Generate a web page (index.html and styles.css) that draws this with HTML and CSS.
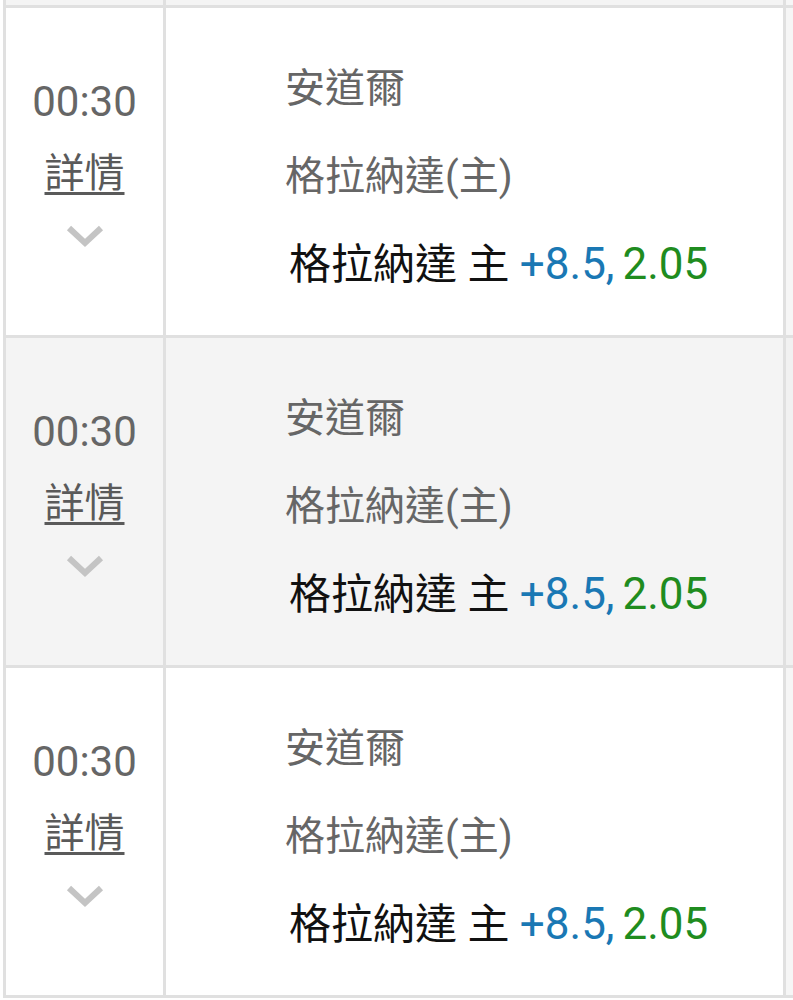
FILE: index.html
```html
<!DOCTYPE html>
<html lang="zh-Hant">
<head>
<meta charset="utf-8">
<link rel="stylesheet" href="styles.css">
</head>
<body>
<div class="table">
  <div class="row stub"><div class="cell left"></div><div class="cell main"></div><div class="cell extra"></div></div>

  <div class="row">
    <div class="cell left">
      <div class="time">00:30</div>
      <a class="detail">詳情</a>
      <svg class="chev" width="38" height="26" viewBox="0 0 38 26"><path d="M3 5 L19 20 L35 5" fill="none" stroke="#c4c4c4" stroke-width="6"/></svg>
    </div>
    <div class="cell main">
      <div class="line team">安道爾</div>
      <div class="line team">格拉納達(主)</div>
      <div class="line pick">格拉納達 主 <span class="hcp">+8.5,</span><span class="odds">2.05</span></div>
    </div>
    <div class="cell extra"></div>
  </div>

  <div class="row alt">
    <div class="cell left">
      <div class="time">00:30</div>
      <a class="detail">詳情</a>
      <svg class="chev" width="38" height="26" viewBox="0 0 38 26"><path d="M3 5 L19 20 L35 5" fill="none" stroke="#c4c4c4" stroke-width="6"/></svg>
    </div>
    <div class="cell main">
      <div class="line team">安道爾</div>
      <div class="line team">格拉納達(主)</div>
      <div class="line pick">格拉納達 主 <span class="hcp">+8.5,</span><span class="odds">2.05</span></div>
    </div>
    <div class="cell extra"></div>
  </div>

  <div class="row">
    <div class="cell left">
      <div class="time">00:30</div>
      <a class="detail">詳情</a>
      <svg class="chev" width="38" height="26" viewBox="0 0 38 26"><path d="M3 5 L19 20 L35 5" fill="none" stroke="#c4c4c4" stroke-width="6"/></svg>
    </div>
    <div class="cell main">
      <div class="line team">安道爾</div>
      <div class="line team">格拉納達(主)</div>
      <div class="line pick">格拉納達 主 <span class="hcp">+8.5,</span><span class="odds">2.05</span></div>
    </div>
    <div class="cell extra"></div>
  </div>
</div>
</body>
</html>
```

FILE: styles.css
```css
html, body {
  margin: 0;
  padding: 0;
  background: #ffffff;
}
body {
  font-family: Roboto, "Noto Sans CJK TC", sans-serif;
  width: 793px;
  height: 1000px;
  overflow: hidden;
}
.table {
  display: flex;
  flex-direction: column;
  margin-left: 3px;
  border-left: 3px solid #e0e0e0;
  width: 820px;
}
.row {
  display: flex;
  height: 327px;
  border-bottom: 3px solid #e0e0e0;
  background: #ffffff;
}
.row.stub {
  height: 5px;
  background: #f4f4f4;
}
.row.alt {
  background: #f4f4f4;
}
.cell {
  border-right: 3px solid #e0e0e0;
}
.left {
  width: 160px;
  display: flex;
  flex-direction: column;
  align-items: center;
  padding-top: 70px;
  box-sizing: border-box;
}
.main {
  width: 620px;
  padding-left: 119px;
  padding-top: 37px;
  box-sizing: border-box;
}
.extra {
  width: 30px;
  border-right: none;
  background: #f6f6f6;
}
.row.alt .extra { background: #f1f1f1; }
.time {
  font-size: 42px;
  line-height: 48px;
  color: #666666;
  font-family: Roboto, sans-serif;
}
.detail {
  font-family: "Noto Sans CJK TC", sans-serif;
  font-size: 40px;
  line-height: 48px;
  margin-top: 20px;
  color: #5a5a5a;
  text-decoration: underline;
  text-decoration-thickness: 3px;
  text-underline-offset: 5px;
}
.chev {
  margin-top: 29px;
  display: block;
}
.line {
  font-size: 40px;
  line-height: 88px;
  white-space: nowrap;
}
.team {
  color: #666666;
  font-family: Roboto, "Noto Sans CJK TC", sans-serif;
}
.pick {
  color: #111111;
  padding-left: 4px;
  font-size: 42px;
}
.hcp, .odds {
  font-size: 44px;
  line-height: 1;
}
.hcp {
  color: #1a78b4;
  margin-right: 8px;
}
.odds {
  color: #1f8c1f;
}
```
